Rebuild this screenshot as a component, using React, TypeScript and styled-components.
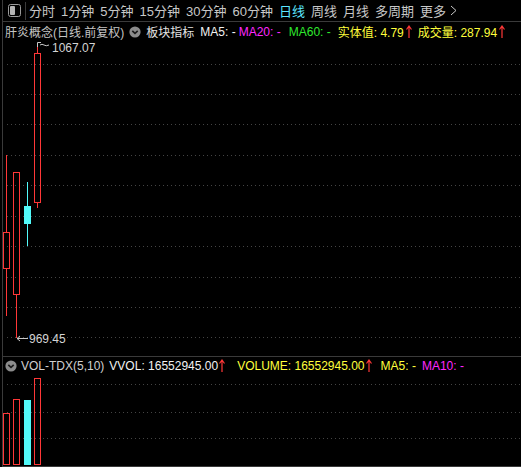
import React from 'react'
import styled, { createGlobalStyle } from 'styled-components'

const GlobalStyle = createGlobalStyle`
  html, body {
    margin: 0;
    background: #000;
  }
  body {
    font-family: "Liberation Sans", "Noto Sans CJK SC", sans-serif;
  }
`

const Frame = styled.div`
  width: 518px;
  height: 467px;
  margin-left: 2px;
  border-left: 1px solid #3a3a3a;
  display: flex;
  flex-direction: column;
  background: #000;
  overflow: hidden;
`

const Toolbar = styled.div`
  height: 21px;
  flex: none;
  border-bottom: 1px solid #3a3a3a;
  display: flex;
  align-items: center;
  font-size: 13px;
  color: #c8c8c8;
  white-space: nowrap;
`

const IconCell = styled.div`
  width: 22px;
  height: 18px;
  border-right: 1px solid #3a3a3a;
  display: flex;
  align-items: center;
  justify-content: center;
`

const Tabs = styled.div`
  display: flex;
  align-items: center;
  gap: 6px;
  margin-left: 3px;
`

const Tab = styled.span<{ $active?: boolean }>`
  color: ${p => (p.$active ? '#5ce6ff' : '#c8c8c8')};
  display: flex;
  align-items: center;
  gap: 4px;
`

const InfoRow = styled.div`
  height: 19px;
  flex: none;
  display: flex;
  align-items: center;
  padding-left: 2px;
  font-size: 12px;
  white-space: nowrap;
`

const Label = styled.span<{ $color: string; $gap?: number }>`
  color: ${p => p.$color};
  margin-right: ${p => p.$gap ?? 0}px;
  display: flex;
  align-items: center;
`

const Drop = styled.span<{ $left: number; $right: number }>`
  display: flex;
  margin: 0 ${p => p.$right}px 0 ${p => p.$left}px;
`

const MainPanel = styled.div`
  position: relative;
  height: 315px;
  flex: none;
`

const AxisMark = styled.div`
  position: absolute;
  left: -3px;
  top: 18px;
  width: 2px;
  height: 60px;
  background: #a80000;
`

const VolumePanel = styled.div`
  flex: none;
  border-top: 1px solid #3a3a3a;
  border-bottom: 1px solid #3a3a3a;
  display: flex;
  flex-direction: column;
`

const VolHeader = styled(InfoRow)`
  height: 17px;
  padding-left: 1px;
`

const ChartSvg = styled.svg`
  display: block;
`

const RED = '#ff3737'
const CYAN = '#52fafa'
const GRID = '#444'

const UpArrow = () => (
  <svg width="6" height="13" viewBox="0 0 6 13">
    <path d="M3 1 L3 13 M0.5 4.5 L3 1 L5.5 4.5" stroke={RED} strokeWidth="1.2" fill="none" />
  </svg>
)

const CircleDown = () => (
  <svg width="12" height="12" viewBox="0 0 12 12">
    <circle cx="6" cy="6" r="5.6" fill="#8c8c8c" />
    <path d="M3.3 4.8 L6 7.4 L8.7 4.8" stroke="#1a1a1a" strokeWidth="1.6" fill="none" />
  </svg>
)

const PanelIcon = () => (
  <svg width="13" height="13" viewBox="0 0 13 13">
    <rect x="0.5" y="0.5" width="12" height="12" rx="2" fill="none" stroke="#9a9a9a" />
    <rect x="2" y="2" width="5" height="9" rx="1" fill="#b4b4b4" />
  </svg>
)

const Chevron = () => (
  <svg width="7" height="11" viewBox="0 0 7 11">
    <path d="M1 1 L6 5.5 L1 10" stroke="#c8c8c8" strokeWidth="1" fill="none" />
  </svg>
)

const tabs = ['分时', '1分钟', '5分钟', '15分钟', '30分钟', '60分钟', '日线', '周线', '月线', '多周期']

const mainGrid = [64, 94, 124, 155, 185, 216, 246, 277, 307, 337]
const volGrid = [384, 412, 438]

type Candle = { x: number; w: number; hi: number; top: number; bot: number; lo: number; up: boolean }

// page coordinates, the svg viewBox is offset so they line up
const candles: Candle[] = [
  { x: 3, w: 6, hi: 155, top: 232, bot: 268, lo: 316, up: true },
  { x: 13, w: 6, hi: 172, top: 172, bot: 294, lo: 338, up: true },
  { x: 24, w: 7, hi: 182, top: 206, bot: 224, lo: 246, up: false },
  { x: 34, w: 6, hi: 45, top: 53, bot: 202, lo: 208, up: true },
]

const volumes = [413, 399, 400, 378]

const GridLines = ({ ys, x0 }: { ys: number[]; x0: number }) => (
  <>
    {ys.map(y => (
      <line key={y} x1={x0} x2={521} y1={y + 0.5} y2={y + 0.5} stroke={GRID} strokeDasharray="1 3" />
    ))}
  </>
)

const CandleShape = ({ c }: { c: Candle }) => {
  const mid = c.x + Math.floor(c.w / 2) + 0.5
  if (!c.up) {
    return (
      <g>
        <line x1={mid} x2={mid} y1={c.hi} y2={c.lo} stroke={CYAN} />
        <rect x={c.x} y={c.top} width={c.w} height={c.bot - c.top} fill={CYAN} />
      </g>
    )
  }
  return (
    <g stroke={RED} fill="none">
      {c.hi < c.top && <line x1={mid} x2={mid} y1={c.hi} y2={c.top} />}
      <rect x={c.x + 0.5} y={c.top + 0.5} width={c.w} height={c.bot - c.top} />
      <line x1={mid} x2={mid} y1={c.bot + 1} y2={c.lo} />
    </g>
  )
}

const App = () => {
  return (
    <>
      <GlobalStyle />
      <Frame>
        <Toolbar>
          <IconCell>
            <PanelIcon />
          </IconCell>
          <Tabs>
            {tabs.map(t => (
              <Tab key={t} $active={t === '日线'}>
                {t}
              </Tab>
            ))}
            <Tab>
              更多
              <Chevron />
            </Tab>
          </Tabs>
        </Toolbar>

        <InfoRow>
          <Label $color="#c4c4c4">肝炎概念(日线.前复权)</Label>
          <Drop $left={5} $right={5}>
            <CircleDown />
          </Drop>
          <Label $color="#e4e4e4" $gap={6}>板块指标</Label>
          <Label $color="#f2f2f2" $gap={3}>MA5: -</Label>
          <Label $color="#ff28ff" $gap={8}>MA20: -</Label>
          <Label $color="#2ee82e" $gap={7}>MA60: -</Label>
          <Label $color="#ffff3c" $gap={2}>实体值: 4.79</Label>
          <Label $color={RED} $gap={6}>
            <UpArrow />
          </Label>
          <Label $color="#ffff3c" $gap={2}>成交量: 287.94</Label>
          <Label $color={RED}>
            <UpArrow />
          </Label>
        </InfoRow>

        <MainPanel>
          <AxisMark />
          <ChartSvg width="518" height="315" viewBox="3 41 518 315">
            <GridLines ys={mainGrid} x0={7} />
            {candles.map((c, i) => (
              <CandleShape key={i} c={c} />
            ))}
            <path d="M37.5 47 L37.5 42.5 L41 42.5 M40 45 Q42 43.5 44 45 T49 45" stroke="#c8c8c8" fill="none" />
            <text x="52" y="52" fill="#d4d4d4" fontSize="12" fontFamily="Liberation Sans, sans-serif">
              1067.07
            </text>
            <path d="M17 338.5 L28 338.5 M20 336 L17 338.5 L20 341" stroke="#c8c8c8" fill="none" />
            <text x="29" y="343" fill="#d4d4d4" fontSize="12" fontFamily="Liberation Sans, sans-serif">
              969.45
            </text>
          </ChartSvg>
        </MainPanel>

        <VolumePanel>
          <VolHeader>
            <Drop $left={1} $right={4}>
              <CircleDown />
            </Drop>
            <Label $color="#d0d0d0" $gap={5}>VOL-TDX(5,10)</Label>
            <Label $color="#f2f2f2" $gap={1}>VVOL: 16552945.00</Label>
            <Label $color={RED} $gap={12}>
              <UpArrow />
            </Label>
            <Label $color="#ffff3c" $gap={1}>VOLUME: 16552945.00</Label>
            <Label $color={RED} $gap={9}>
              <UpArrow />
            </Label>
            <Label $color="#ffff3c" $gap={6}>MA5: -</Label>
            <Label $color="#ff28ff">MA10: -</Label>
          </VolHeader>
          <ChartSvg width="518" height="92" viewBox="3 374 518 92">
            <GridLines ys={volGrid} x0={7} />
            {candles.map((c, i) =>
              c.up ? (
                <rect
                  key={i}
                  x={c.x + 0.5}
                  y={volumes[i] + 0.5}
                  width={c.w}
                  height={464 - volumes[i]}
                  fill="none"
                  stroke={RED}
                />
              ) : (
                <rect key={i} x={c.x} y={volumes[i]} width={c.w} height={465 - volumes[i]} fill={CYAN} />
              )
            )}
          </ChartSvg>
        </VolumePanel>
      </Frame>
    </>
  )
}

export default App
